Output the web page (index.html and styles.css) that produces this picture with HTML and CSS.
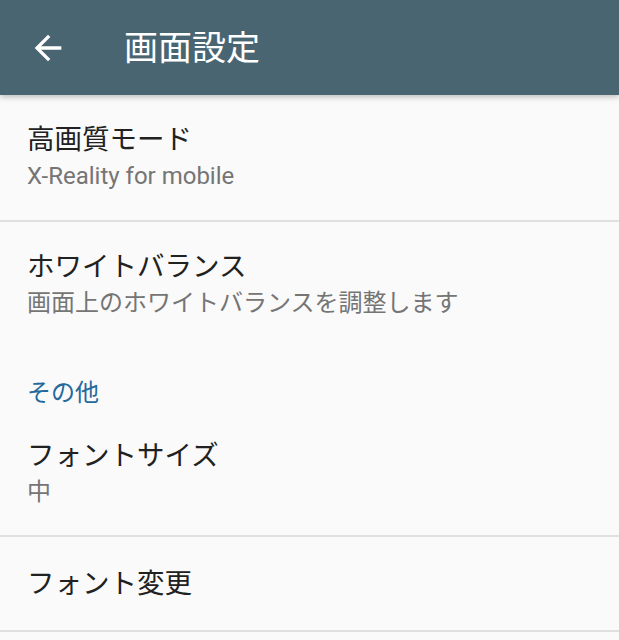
FILE: index.html
```html
<!DOCTYPE html>
<html lang="ja">
<head>
<meta charset="utf-8">
<title>画面設定</title>
<link rel="stylesheet" href="styles.css">
</head>
<body>
<header class="appbar">
  <button class="back" aria-label="戻る">
    <svg viewBox="0 0 24 24" width="40" height="40"><path fill="#fff" d="M20 11H7.83l5.59-5.59L12 4l-8 8 8 8 1.41-1.41L7.83 13H20v-2z"/></svg>
  </button>
  <h1 class="title">画面設定</h1>
</header>
<main class="list">
  <div class="item two first divided">
    <div class="item-title">高画質モード</div>
    <div class="item-sub">X-Reality for mobile</div>
  </div>
  <div class="item two">
    <div class="item-title">ホワイトバランス</div>
    <div class="item-sub">画面上のホワイトバランスを調整します</div>
  </div>
  <div class="category">その他</div>
  <div class="item two third divided">
    <div class="item-title">フォントサイズ</div>
    <div class="item-sub">中</div>
  </div>
  <div class="item one divided">
    <div class="item-title">フォント変更</div>
  </div>
</main>
</body>
</html>
```

FILE: styles.css
```css
* { box-sizing: border-box; }
html, body {
  margin: 0;
  padding: 0;
  background: #fafafa;
  font-family: Roboto, "Noto Sans CJK JP", sans-serif;
}
.appbar {
  height: 95px;
  background: #4a6572;
  display: flex;
  align-items: center;
  position: relative;
  z-index: 1;
  box-shadow: 0 2px 6px rgba(0,0,0,0.25);
}
.back {
  width: 40px;
  height: 40px;
  margin-left: 28px;
  padding: 0;
  border: 0;
  background: none;
  display: flex;
}
.title {
  margin: 0 0 0 56px;
  color: #fff;
  font-size: 34px;
  font-weight: 400;
  line-height: 40px;
}
.list {
  display: flex;
  flex-direction: column;
}
.item {
  padding: 0 27px;
  display: flex;
  flex-direction: column;
}
.item.two {
  height: 125px;
  padding-top: 27px;
}
.item.two.first {
  height: 127px;
}
.item.two.third {
  height: 126px;
}
.item.one {
  height: 95px;
  justify-content: center;
}
.item.divided {
  border-bottom: 2px solid #e0e0e0;
}
.item-title {
  font-size: 27.5px;
  line-height: 36px;
  color: #212121;
}
.item-sub {
  font-size: 24px;
  line-height: 37px;
  color: #757575;
}
.category {
  height: 64px;
  padding: 32px 27px 0;
  font-size: 24px;
  line-height: 28px;
  color: #24699a;
}
```
